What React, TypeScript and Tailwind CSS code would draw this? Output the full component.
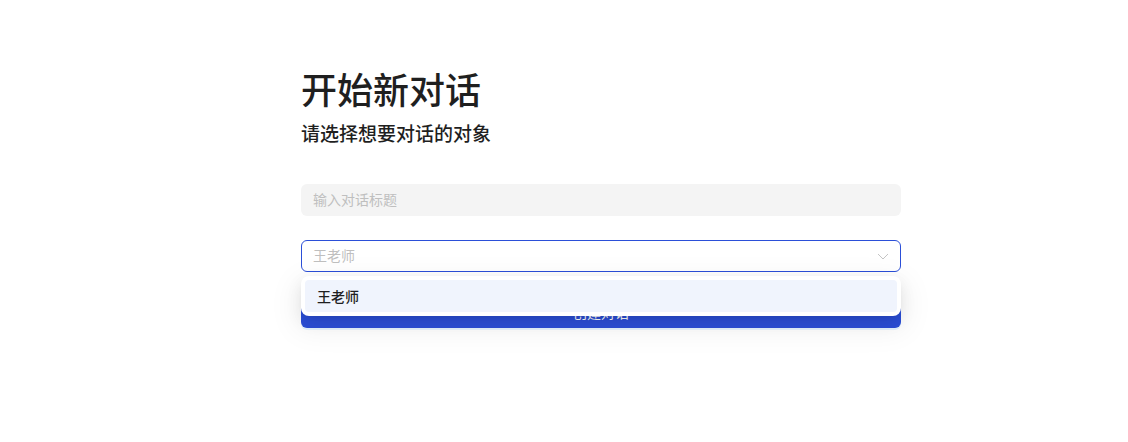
import { useState } from "react";

const teachers = ["王老师"];

export default function App() {
  const [title, setTitle] = useState("");
  const [open] = useState(true);
  const [selected] = useState("王老师");

  return (
    <div
      className="min-h-[442px] w-full bg-white"
      style={{ fontFamily: '"Noto Sans CJK SC", "Noto Sans", sans-serif' }}
    >
      <div className="ml-[301px] w-[600px] pt-[63px]">
        <h1 className="text-[36px] font-medium leading-[50px] text-[#1f1f1f]">开始新对话</h1>
        <p className="mt-[6px] text-[19px] font-medium leading-[28px] text-[#1f1f1f]">
          请选择想要对话的对象
        </p>

        <input
          value={title}
          onChange={(e) => setTitle(e.target.value)}
          placeholder="输入对话标题"
          className="mt-[37px] block h-8 w-full rounded-md bg-[#f4f4f4] px-3 pb-[2px] text-sm text-[#1f1f1f] outline-none placeholder:text-[#bfbfbf]"
        />

        {/* Select with open dropdown */}
        <div className="relative mt-6">
          <div className="flex h-8 items-center justify-between rounded-md border border-[#2b4fd8] bg-white pb-[2px] pl-[11px] pr-[11px]">
            <span className="text-sm text-[#bfbfbf]">{selected}</span>
            <svg width="12" height="12" viewBox="0 0 12 12" fill="none" className="mt-[2px] text-[#c4c4c4]">
              <path d="M1 4l5 5 5-5" stroke="currentColor" strokeWidth="1" />
            </svg>
          </div>

          {open && (
            <div className="absolute left-0 right-0 top-9 z-10 rounded-lg bg-white p-1 shadow-[0_6px_16px_0_rgba(0,0,0,0.08),0_3px_6px_-4px_rgba(0,0,0,0.12),0_9px_28px_8px_rgba(0,0,0,0.05)]">
              {teachers.map((t) => (
                <div
                  key={t}
                  className="flex h-8 items-center rounded bg-[#f0f4fd] px-3 text-sm font-medium text-[#1f1f1f]"
                >
                  {t}
                </div>
              ))}
            </div>
          )}

          <button className="mt-6 h-8 w-full rounded-md bg-[#2b4fd8] text-sm text-white shadow-[0_2px_0_rgba(5,145,255,0.1)]">
            创建对话
          </button>
        </div>
      </div>
    </div>
  );
}
